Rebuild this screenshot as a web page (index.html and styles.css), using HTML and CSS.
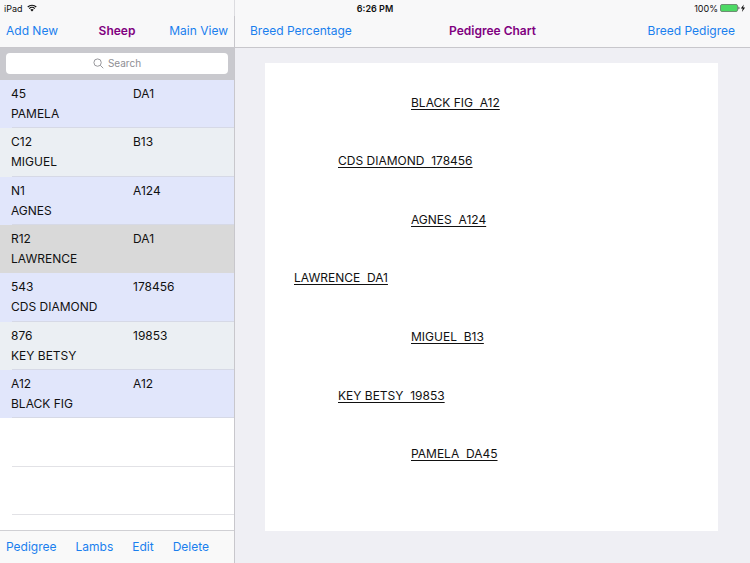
FILE: index.html
```
<!DOCTYPE html>
<html lang="en">

<head>
    <meta charset="utf-8">
    <meta name="viewport" content="width=device-width, initial-scale=1">
    <title>Pedigree Chart</title>
    <link rel="stylesheet" href="styles.css">
</head>

<body>
    <div class="status-bar">
        <div class="status-left">
            <span>iPad</span>
            <svg class="wifi" viewBox="0 0 20 15" aria-hidden="true">
                <path d="M1.5 5.5a12 12 0 0 1 17 0M4.5 8.7a7.8 7.8 0 0 1 11 0" />
                <path class="solid" d="M10 14.6L6.6 11.2a4.8 4.8 0 0 1 6.8 0z" />
            </svg>
        </div>
        <div class="status-time">6:26 PM</div>
        <div class="status-right">
            <span>100%</span>
            <svg class="battery" viewBox="0 0 26 10" aria-hidden="true">
                <rect x="0.5" y="1.5" width="17" height="7" rx="1.5" fill="#4cd964" stroke="#6f8f74" />
                <path d="M18.5 3.5v3c1.2-.4 1.2-2.6 0-3z" fill="#222" />
                <path d="M23.8 1.4L20.8 5.5h1.9l-.8 3.4 3.2-4.4h-2z" fill="#111" />
            </svg>
        </div>
    </div>

    <div class="split">
        <section class="sidebar">
            <header class="nav-bar">
                <button type="button">Add New</button>
                <h1>Sheep</h1>
                <button type="button">Main View</button>
            </header>

            <form class="search-bar">
                <svg viewBox="0 0 12 12" aria-hidden="true">
                    <circle cx="5" cy="5" r="4" />
                    <path d="M8 8l3.2 3.2" />
                </svg>
                <input type="search" placeholder="Search" aria-label="Search">
            </form>

            <div class="list-scroll">
                <ul class="sheep-list">
                    <li class="odd"><span>45</span><span>DA1</span><span>PAMELA</span></li>
                    <li class="even"><span>C12</span><span>B13</span><span>MIGUEL</span></li>
                    <li class="odd"><span>N1</span><span>A124</span><span>AGNES</span></li>
                    <li class="selected"><span>R12</span><span>DA1</span><span>LAWRENCE</span></li>
                    <li class="odd"><span>543</span><span>178456</span><span>CDS DIAMOND</span></li>
                    <li class="even"><span>876</span><span>19853</span><span>KEY BETSY</span></li>
                    <li class="odd"><span>A12</span><span>A12</span><span>BLACK FIG</span></li>
                    <li></li>
                    <li></li>
                </ul>
            </div>

            <footer class="toolbar">
                <button type="button">Pedigree</button>
                <button type="button">Lambs</button>
                <button type="button">Edit</button>
                <button type="button">Delete</button>
            </footer>
        </section>

        <main class="detail">
            <header class="nav-bar">
                <button type="button">Breed Percentage</button>
                <h1>Pedigree Chart</h1>
                <button type="button">Breed Pedigree</button>
            </header>

            <!-- sire line on top, dam line below -->
            <div class="chart">
                <a href="#" class="gen3">BLACK FIG&nbsp; A12</a>
                <a href="#" class="gen2">CDS DIAMOND&nbsp; 178456</a>
                <a href="#" class="gen3">AGNES&nbsp; A124</a>
                <a href="#" class="gen1">LAWRENCE&nbsp; DA1</a>
                <a href="#" class="gen3">MIGUEL&nbsp; B13</a>
                <a href="#" class="gen2">KEY BETSY&nbsp; 19853</a>
                <a href="#" class="gen3">PAMELA&nbsp; DA45</a>
            </div>
        </main>
    </div>
</body>

</html>
```

FILE: styles.css
```
* {
    margin: 0;
    padding: 0;
    box-sizing: border-box;
}

body {
    display: flex;
    flex-direction: column;
    height: 100vh;
    font-family: Inter, "Liberation Sans", sans-serif;
    font-size: 12px;
    color: #111;
    background: #efeff4;
}

button {
    border: none;
    background: none;
    font: inherit;
    font-size: 12px;
    color: #1a7fee;
    white-space: nowrap;
}

/* status bar */
.status-bar {
    position: relative;
    display: flex;
    align-items: center;
    height: 16px;
    padding: 0 4px;
    font-size: 9px;
    background: #f8f8f9;
}

.status-bar::after {
    content: "";
    position: absolute;
    left: 234px;
    top: 0;
    bottom: 0;
    width: 1px;
    background: #dcdce0;
}

.status-left,
.status-right {
    flex: 1;
    display: flex;
    align-items: center;
    gap: 4px;
}

.status-right {
    justify-content: flex-end;
    gap: 2px;
}

.status-time {
    font-weight: 600;
}

.wifi {
    width: 10px;
    height: 8px;
    fill: none;
    stroke: #111;
    stroke-width: 2.4;
}

.wifi .solid {
    fill: #111;
    stroke: none;
}

.battery {
    width: 26px;
    height: 10px;
}

/* two panes */
.split {
    flex: 1;
    display: flex;
    min-height: 0;
}

.sidebar {
    display: flex;
    flex-direction: column;
    width: 235px;
    border-right: 1px solid #c8c7cc;
    background: white;
}

.detail {
    flex: 1;
    display: flex;
    flex-direction: column;
    min-width: 0;
}

.nav-bar {
    display: grid;
    grid-template-columns: 1fr auto 1fr;
    align-items: center;
    height: 32px;
    padding: 0 6px 2px;
    background: #f8f8f9;
    border-bottom: 1px solid #c8c7cc;
}

.detail .nav-bar {
    padding: 0 15px 2px;
}

.nav-bar button:first-child {
    justify-self: start;
}

.nav-bar button:last-child {
    justify-self: end;
}

.nav-bar h1 {
    font-size: 12px;
    font-weight: 600;
    color: #800080;
}

/* search */
.search-bar {
    position: relative;
    padding: 5px 6px 6px;
    background: #c9c9ce;
}

.search-bar input {
    display: block;
    width: 100%;
    height: 21px;
    padding-left: 26px;
    padding-bottom: 1px;
    border: none;
    border-radius: 4px;
    background: white;
    font: inherit;
    font-size: 10px;
    text-align: center;
}

.search-bar input::placeholder {
    color: #8e8e93;
}

.search-bar svg {
    position: absolute;
    left: calc(50% - 24px);
    top: 10px;
    width: 11px;
    height: 11px;
    fill: none;
    stroke: #8e8e93;
}

/* sheep list */
.list-scroll {
    flex: 1;
    overflow: hidden;
}

.sheep-list {
    display: grid;
    grid-auto-rows: 1fr;
    min-height: 435px;
    list-style: none;
}

.sheep-list li {
    position: relative;
    display: grid;
    grid-template-columns: 122px 1fr;
    align-content: center;
    padding-left: 11px;
    line-height: 20px;
}

.sheep-list li::after {
    content: "";
    position: absolute;
    left: 12px;
    right: 0;
    bottom: 0;
    height: 1px;
    background: #e2e2e6;
}

.sheep-list .odd {
    background: #e1e6fb;
}

.sheep-list .even {
    background: #ebeff3;
}

.sheep-list .odd::after,
.sheep-list .even::after {
    background: #d6d9e6;
}

.sheep-list .selected {
    background: #d9d9d9;
}

.sheep-list .selected::after {
    display: none;
}

.toolbar {
    display: flex;
    align-items: center;
    gap: 19px;
    height: 33px;
    padding: 0 6px 1px;
    background: #f9f9f9;
    border-top: 1px solid #d0d0d4;
}

/* chart */
.chart {
    flex: 1;
    display: grid;
    grid-auto-rows: 1fr;
    align-items: center;
    justify-items: start;
    margin: 15px 32px 32px 30px;
    padding: 10px 0 48px;
    background: white;
}

.chart a {
    color: #111;
    text-underline-offset: 2px;
}

.gen1 {
    margin-left: 29px;
}

.gen2 {
    margin-left: 73px;
}

.gen3 {
    margin-left: 146px;
}
```
